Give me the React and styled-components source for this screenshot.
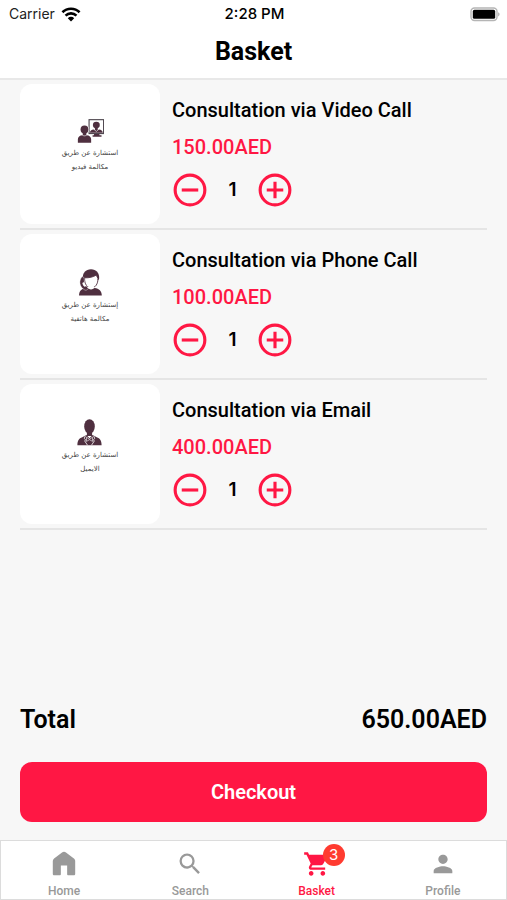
import React, { useState } from "react";
import styled, { createGlobalStyle } from "styled-components";

const accent = "#ff1744";
const plum = "#4f2f3f";

const GlobalStyle = createGlobalStyle`
  * { box-sizing: border-box; }
  body { margin: 0; background: #f7f7f7; }
  button { font: inherit; color: inherit; background: none; border: 0; padding: 0; cursor: pointer; }
  h1, h2, p { margin: 0; }
`;

const Screen = styled.div`
  min-height: 100vh;
  display: flex;
  flex-direction: column;
  background: #f7f7f7;
  color: #000;
  font-family: Roboto, "Liberation Sans", sans-serif;
`;

const Header = styled.header`
  background: #fff;
  border-bottom: 2px solid #e8e8e8;
`;

const StatusBar = styled.div`
  display: grid;
  grid-template-columns: 1fr auto 1fr;
  align-items: center;
  height: 28px;
  padding: 0 7px 0 9px;
  font: 400 15px/20px Inter, sans-serif;
`;

const Carrier = styled.div`
  display: flex;
  align-items: center;
  gap: 6px;
  color: #222;
  font-size: 14px;
`;

const Clock = styled.time`
  font-weight: 500;
`;

const BatteryIcon = styled.svg`
  justify-self: end;
`;

const PageTitle = styled.h1`
  height: 50px;
  font-size: 25px;
  line-height: 48px;
  font-weight: 700;
  text-align: center;
`;

const List = styled.ul`
  flex: 1;
  list-style: none;
  margin: 0;
  padding: 0 20px;
`;

const Item = styled.li`
  display: flex;
  gap: 12px;
  padding: 4px 0;
  border-bottom: 2px solid #e5e5e5;
`;

const Thumb = styled.div`
  flex: none;
  display: flex;
  flex-direction: column;
  align-items: center;
  width: 140px;
  height: 140px;
  padding-top: 34px;
  border-radius: 12px;
  background: #fff;
`;

const Caption = styled.p`
  max-width: 72px;
  margin-top: ${(p) => p.$gap}px;
  color: #444;
  font: 400 7px/14px "DejaVu Sans", sans-serif;
  text-align: center;
`;

const Details = styled.div`
  flex: 1;
  min-width: 0;
  padding-top: 14px;
`;

const Name = styled.h2`
  font-size: 20px;
  line-height: 24px;
  font-weight: 500;
`;

const Price = styled.p`
  margin-top: 13px;
  color: ${accent};
  font-size: 20px;
  line-height: 24px;
  font-weight: 500;
`;

const Stepper = styled.div`
  display: flex;
  align-items: center;
  margin-top: 14px;
  padding-left: 1px;
`;

const StepButton = styled.button`
  display: flex;
  color: ${accent};
`;

const Quantity = styled.output`
  width: 51px;
  font: 600 19px/24px Inter, sans-serif;
  text-align: center;
`;

const Summary = styled.section`
  padding: 0 20px 18px;
`;

const TotalRow = styled.div`
  display: flex;
  justify-content: space-between;
  margin-bottom: 27px;
  font-size: 25px;
  line-height: 30px;
  font-weight: 600;
`;

const Checkout = styled.button`
  && {
    width: 100%;
    height: 60px;
    border-radius: 12px;
    background: ${accent};
    color: #fff;
    font-size: 20px;
    font-weight: 600;
  }
`;

const TabBar = styled.nav`
  display: grid;
  grid-template-columns: repeat(4, 1fr);
  height: 60px;
  background: #fff;
  border: 1px solid #dcdcdc;
`;

const Tab = styled.a`
  display: flex;
  flex-direction: column;
  align-items: center;
  gap: 6px;
  padding-top: 9px;
  color: ${(p) => (p.$active ? accent : "#999")};
  font-size: 12px;
  line-height: 14px;
  font-weight: 500;
  text-decoration: none;
`;

const TabIcon = styled.span`
  position: relative;
  display: flex;
`;

const Badge = styled.span`
  position: absolute;
  top: -6px;
  right: -14px;
  width: 22px;
  height: 22px;
  border-radius: 50%;
  background: #ff3b30;
  color: #fff;
  font: 400 15px/22px Inter, sans-serif;
  text-align: center;
`;

const Wifi = () => (
  <svg width="20" height="15" viewBox="0 0 18 14" aria-label="Wi-Fi" fill="none" stroke="#000" strokeWidth="2.4">
    <path d="M1 4.9A11.4 11.4 0 0 1 17 4.9" />
    <path d="M3.9 8A7.3 7.3 0 0 1 14.1 8" />
    <path d="M9 13.5 6 10.4a4.3 4.3 0 0 1 6 0z" fill="#000" stroke="none" />
  </svg>
);

const Battery = () => (
  <BatteryIcon width="30" height="15" viewBox="0 0 30 15" aria-label="Battery full">
    <rect x="1" y="1" width="26" height="12.5" rx="3.5" fill="#fff" stroke="#b5b5b5" strokeWidth="1.4" />
    <rect x="2.8" y="2.8" width="22.4" height="9" rx="1.6" />
    <path d="M28.2 5.2c1.8.6 1.8 3.6 0 4.2z" fill="#aaa" />
  </BatteryIcon>
);

const CircleSign = ({ plus }) => (
  <svg width="34" height="34" viewBox="1.7 1.7 20.6 20.6" fill="none" stroke="currentColor" strokeWidth="1.9" aria-hidden="true">
    <circle cx="12" cy="12" r="9" />
    <path d={plus ? "M7 12h10M12 7v10" : "M7 12h10"} />
  </svg>
);

const VideoDrawing = () => (
  <svg width="28" height="28" viewBox="-1 1 27 27" fill={plum} aria-hidden="true">
    <rect x="11.6" y="2.6" width="14" height="13.4" fill="#fff" stroke="#514951" strokeWidth="1.1" />
    <path d="M16.4 16.4h5.2v1.3h2v1.5H15v-1.5h1.4z" />
    <ellipse cx="18.6" cy="7.7" rx="3.3" ry="3.1" />
    <path d="M17.2 10H20v2.3l-1.4 1.5-1.4-1.5zM12.3 15.3c.2-1.8 1.6-2.8 3.8-3.1l2.5 2 2.5-2c2.2.3 3.6 1.3 3.8 3.1z" />
    <circle cx="7.2" cy="12.1" r="4.5" fill="#fff" />
    <circle cx="7.2" cy="12.1" r="3.8" />
    <path d="M5.5 15H9v3H5.5zM.8 24.8v-3.2c0-2.5 1.8-3.8 4.5-4h3.8c2.8.2 4.5 1.5 4.5 4v3.2z" />
    <path d="M5 17.3c1 1.2 3.4 1.2 4.4 0" fill="none" stroke="#fff" strokeWidth=".6" />
  </svg>
);

const PhoneDrawing = () => (
  <svg width="28" height="28" viewBox="0 0 28 28" fill={plum} aria-hidden="true">
    <path d="M3 27.6c0-4.6 2.6-7 7-7.6h8.6c4.6.6 7 3 7.2 7.6z" />
    <path d="M6.8 11C6.3 4.7 9.8 1.2 15 1.2s8.6 3.5 8.1 9.8l-1.4 1.4H8z" />
    <path d="M8.6 9.8c4.6.2 8.6-.8 11.600-2.700l1.700 3.200c.3 5.600-2.700 9.700-6.700 9.700-3.700 0-7-3.800-6.600-10.200z" fill="#fff" stroke={plum} strokeWidth=".9" />
    <path d="M11.2 19.6c1.6 2.4 6 2.4 7.7 0l-1-.8h-5.7z" fill="#fff" />
    <path d="M6.300 8.600c-3.900 3.900-3.100 10.700 2.800 13.600 1.300.2 2.600-.5 3.100-1.700l-1.800-2.600-2.100.6c-1-1-1.500-2.200-1.700-3.600l1.900-1-.5-4.300z" stroke="#fff" strokeWidth=".4" />
  </svg>
);

const EmailDrawing = () => (
  <svg width="28" height="28" viewBox="1 0 26 28" fill={plum} aria-hidden="true">
    <ellipse cx="13.5" cy="8.5" rx="5.3" ry="7.3" />
    <path d="M10.9 13h5.2v5h-5.2zM1.4 27.2c0-4.6 1.5-6.700 4.900-7.900l4-2.200 3.200 3.100 3.200-3.100 4 2.200c3.400 1.200 4.900 3.300 4.900 7.900z" />
    <path d="m9.400 17.800-1.100 2.500 1.200 1.500-.8 1.200 2.800 4.200M17.600 17.800l1.100 2.500-1.200 1.500.8 1.200-2.800 4.200" fill="none" stroke="#fff" strokeWidth=".8" />
    <path d="m10.500 19.200 3 2.100 3-2.100v4.200l-3-1.700-3 1.700z" stroke="#fff" strokeWidth=".6" />
  </svg>
);

const products = [
  { name: "Consultation via Video Call", price: 150, caption: ["استشارة عن طريق", "مكالمة فيديو"], gap: 0, Drawing: VideoDrawing },
  { name: "Consultation via Phone Call", price: 100, caption: ["إستشارة عن طريق", "مكالمة هاتفية"], gap: 2, Drawing: PhoneDrawing },
  { name: "Consultation via Email", price: 400, caption: ["استشارة عن طريق", "الايميل"], gap: 2, Drawing: EmailDrawing },
];

const tabs = [
  { label: "Home", path: "M10.3 2.1 3.5 7.2C2.8 7.8 2.4 8.5 2.4 9.4v11.1c0 .7.5 1.2 1.2 1.2h4.7c.6 0 1-.4 1-1v-7.5h5.4v7.5c0 .6.4 1 1 1h4.7c.7 0 1.2-.5 1.2-1.2V9.4c0-.9-.4-1.6-1.1-2.2l-6.8-5.1c-1-.8-2.4-.8-3.4 0z" },
  { label: "Search", path: "M15.5 14h-.79l-.28-.27A6.47 6.47 0 0 0 16 9.5 6.5 6.5 0 1 0 9.5 16c1.61 0 3.09-.59 4.23-1.57l.27.28v.79l5 4.99L20.49 19zm-6 0C7.01 14 5 11.99 5 9.5S7.01 5 9.5 5 14 7.01 14 9.5 11.99 14 9.5 14z" },
  { label: "Basket", path: "M7 18c-1.1 0-1.99.9-1.99 2S5.9 22 7 22s2-.9 2-2-.9-2-2-2zM1 2v2h2l3.6 7.59-1.35 2.45c-.16.28-.25.61-.25.96 0 1.1.9 2 2 2h12v-2H7.42c-.14 0-.25-.11-.25-.25l.03-.12.9-1.63h7.45c.75 0 1.41-.41 1.75-1.03l3.58-6.49A1 1 0 0 0 20 4H5.21l-.94-2zm16 16c-1.1 0-1.99.9-1.99 2s.89 2 1.99 2 2-.9 2-2-.9-2-2-2z", active: true },
  { label: "Profile", path: "M12 12c2.21 0 4-1.79 4-4s-1.79-4-4-4-4 1.79-4 4 1.79 4 4 4zm0 2c-2.67 0-8 1.34-8 4v2h16v-2c0-2.66-5.33-4-8-4z" },
];

const money = (n) => `${n.toFixed(2)}AED`;

export default function App() {
  const [counts, setCounts] = useState([1, 1, 1]);
  const change = (index, delta) =>
    setCounts((all) => all.map((n, i) => (i === index ? Math.max(0, n + delta) : n)));
  const total = products.reduce((sum, p, i) => sum + p.price * counts[i], 0);
  const pieces = counts.reduce((a, b) => a + b, 0);

  return (
    <Screen>
      <GlobalStyle />
      <Header>
        <StatusBar>
          <Carrier>Carrier <Wifi /></Carrier>
          <Clock>2:28 PM</Clock>
          <Battery />
        </StatusBar>
        <PageTitle>Basket</PageTitle>
      </Header>
      <List>
        {products.map(({ name, price, caption, gap, Drawing }, i) => (
          <Item key={name}>
            <Thumb>
              <Drawing />
              <Caption lang="ar" dir="rtl" $gap={gap}>{caption[0]}<br />{caption[1]}</Caption>
            </Thumb>
            <Details>
              <Name>{name}</Name>
              <Price>{money(price)}</Price>
              <Stepper>
                <StepButton type="button" aria-label={`Remove one ${name}`} onClick={() => change(i, -1)}><CircleSign /></StepButton>
                <Quantity>{counts[i]}</Quantity>
                <StepButton type="button" aria-label={`Add one ${name}`} onClick={() => change(i, 1)}><CircleSign plus /></StepButton>
              </Stepper>
            </Details>
          </Item>
        ))}
      </List>
      <Summary>
        <TotalRow>
          <span>Total</span>
          <span>{money(total)}</span>
        </TotalRow>
        <Checkout type="button">Checkout</Checkout>
      </Summary>
      <TabBar>
        {tabs.map(({ label, path, active }) => (
          <Tab key={label} href={`#${label.toLowerCase()}`} $active={active} aria-current={active ? "page" : undefined}>
            <TabIcon>
              <svg width="28" height="28" viewBox="0 0 24 24" fill="currentColor" aria-hidden="true"><path d={path} /></svg>
              {active && <Badge>{pieces}</Badge>}
            </TabIcon>
            {label}
          </Tab>
        ))}
      </TabBar>
    </Screen>
  );
}
